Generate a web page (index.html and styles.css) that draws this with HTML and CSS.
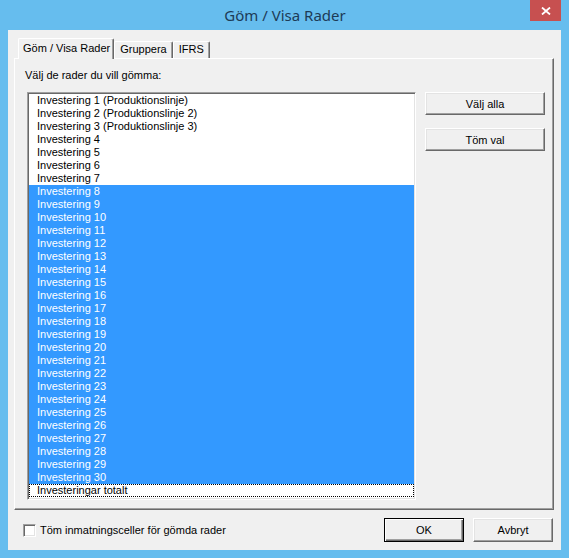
FILE: index.html
```html
<!DOCTYPE html>
<html lang="sv">
<head>
    <meta charset="UTF-8">
    <meta name="viewport" content="width=device-width, initial-scale=1.0">
    <title>Göm / Visa Rader</title>
    <link rel="stylesheet" href="styles.css">
</head>
<body>
    <div class="window">
        <div class="titlebar">
            <div></div>
            <div class="title">Göm / Visa Rader</div>
            <div class="controls">
                <button class="close" type="button" aria-label="Stäng">
                    <svg width="10" height="8" viewBox="0 0 10 8">
                        <path d="M1 0.5 L9 7.5 M9 0.5 L1 7.5" stroke="#fff" stroke-width="1.8" fill="none"/>
                    </svg>
                </button>
            </div>
        </div>

        <div class="client">
            <div class="tabs">
                <div class="tab active">Göm / Visa Rader</div>
                <div class="tab">Gruppera</div>
                <div class="tab">IFRS</div>
            </div>

            <div class="panel">
                <div class="hint">Välj de rader du vill gömma:</div>
                <div class="panel_body">
                    <ul class="list" id="rowList"></ul>
                    <div class="side_buttons">
                        <button class="btn wide" type="button">Välj alla</button>
                        <button class="btn wide" type="button">Töm val</button>
                    </div>
                </div>
            </div>

            <div class="footer">
                <label class="check"><span class="box"></span>Töm inmatningsceller för gömda rader</label>
                <div class="actions">
                    <button class="btn default" type="button">OK</button>
                    <button class="btn" type="button">Avbryt</button>
                </div>
            </div>
        </div>
    </div>

    <script>
        // fill the list: 1-7 not selected, 8-30 selected, totals row has focus
        const list = document.getElementById('rowList');
        const names = {1: ' (Produktionslinje)', 2: ' (Produktionslinje 2)', 3: ' (Produktionslinje 3)'};
        for (let i = 1; i <= 30; i++) {
            const li = document.createElement('li');
            li.textContent = 'Investering ' + i + (names[i] || '');
            if (i >= 8) li.className = 'selected';
            list.appendChild(li);
        }
        const total = document.createElement('li');
        total.textContent = 'Investeringar totalt';
        total.className = 'focused';
        list.appendChild(total);
    </script>
</body>
</html>
```

FILE: styles.css
```css
body {
    margin: 0;
    font-family: "Liberation Sans", Arial, sans-serif;
    font-size: 11px;
    color: #000;
    background-color: #66bdee;
}
.window {
    width: 569px;
    height: 558px;
    display: flex;
    flex-direction: column;
    background-color: #66bdee;
}
.titlebar {
    height: 30px;
    display: grid;
    grid-template-columns: 1fr auto 1fr;
}
.title {
    font-family: "Noto Sans", "Open Sans", sans-serif;
    font-size: 15px;
    line-height: 30px;
    color: #1d3b57;
    padding-left: 1px;
}
.controls {
    display: flex;
    justify-content: flex-end;
    padding-right: 8px;
}
.close {
    width: 31px;
    height: 21px;
    border: none;
    padding: 0;
    background-color: #c75050;
    display: flex;
    align-items: center;
    justify-content: center;
}
.client {
    flex: 1;
    margin: 0 8px 8px 8px;
    background-color: #f0f0f0;
    padding: 8px 7px 0 6px;
    display: flex;
    flex-direction: column;
}

/* tabs */
.tabs {
    display: flex;
    align-items: flex-end;
    height: 21px;
    padding-left: 4px;
    margin-bottom: -1px;
    position: relative;
    z-index: 1;
}
.tab {
    box-sizing: border-box;
    height: 17px;
    line-height: 15px;
    margin-bottom: 1px;
    padding: 0 5px 0 5px;
    background-color: #f0f0f0;
    border-top: 1px solid #fff;
    border-left: 1px solid #fff;
    border-right: 1px solid #696969;
    border-radius: 2px 2px 0 0;
    box-shadow: inset -1px 0 #a0a0a0;
}
.tab.active {
    height: 21px;
    line-height: 19px;
    margin-bottom: 0;
    padding: 0 3px 0 4px;
}

/* panel */
.panel {
    box-sizing: border-box;
    height: 452px;
    border-top: 1px solid #fff;
    border-left: 1px solid #fff;
    border-right: 1px solid #696969;
    border-bottom: 1px solid #696969;
    box-shadow: inset -1px -1px #a0a0a0;
    padding: 10px 8px 0 12px;
}
.hint {
    line-height: 13px;
    margin-left: -2px;
}
.panel_body {
    display: flex;
    margin-top: 10px;
}
.list {
    list-style: none;
    margin: 0;
    padding: 0;
    box-sizing: border-box;
    width: 391px;
    height: 408px;
    background-color: #fff;
    border-top: 1px solid #a0a0a0;
    border-left: 1px solid #a0a0a0;
    border-right: 1px solid #fff;
    border-bottom: 1px solid #fff;
    box-shadow: inset 1px 1px #696969, inset -1px -1px #e3e3e3;
    padding: 1px 1px 1px 1px;
    overflow: hidden;
}
.list li {
    height: 13px;
    line-height: 13px;
    padding-left: 8px;
    white-space: nowrap;
}
.list li.selected {
    background-color: #3399ff;
    color: #fff;
}
.list li.focused {
    box-sizing: border-box;
    border: 1px dotted #000;
    padding-left: 7px;
    line-height: 11px;
}
.side_buttons {
    display: flex;
    flex-direction: column;
    gap: 13px;
    margin-left: 9px;
}

/* buttons */
.btn {
    font-family: "Liberation Sans", Arial, sans-serif;
    font-size: 11px;
    color: #000;
    width: 80px;
    height: 24px;
    padding: 0;
    background-color: #f0f0f0;
    border-top: 1px solid #fff;
    border-left: 1px solid #fff;
    border-right: 1px solid #696969;
    border-bottom: 1px solid #696969;
    box-shadow: inset -1px -1px #a0a0a0, inset 1px 1px #e3e3e3;
}
.btn.wide {
    width: 120px;
    height: 23px;
}
.btn.default {
    border: 1px solid #000;
    box-shadow: inset 1px 1px #fff, inset -1px -1px #696969, inset -2px -2px #a0a0a0;
}

/* footer */
.footer {
    display: flex;
    align-items: center;
    justify-content: space-between;
    padding: 8px 1px 0 9px;
}
.check {
    display: flex;
    align-items: center;
    gap: 4px;
    line-height: 13px;
}
.box {
    box-sizing: border-box;
    width: 13px;
    height: 13px;
    background-color: #fff;
    border-top: 1px solid #a0a0a0;
    border-left: 1px solid #a0a0a0;
    border-right: 1px solid #fff;
    border-bottom: 1px solid #fff;
    box-shadow: inset 1px 1px #696969, inset -1px -1px #e3e3e3;
}
.actions {
    display: flex;
    gap: 9px;
}
```
